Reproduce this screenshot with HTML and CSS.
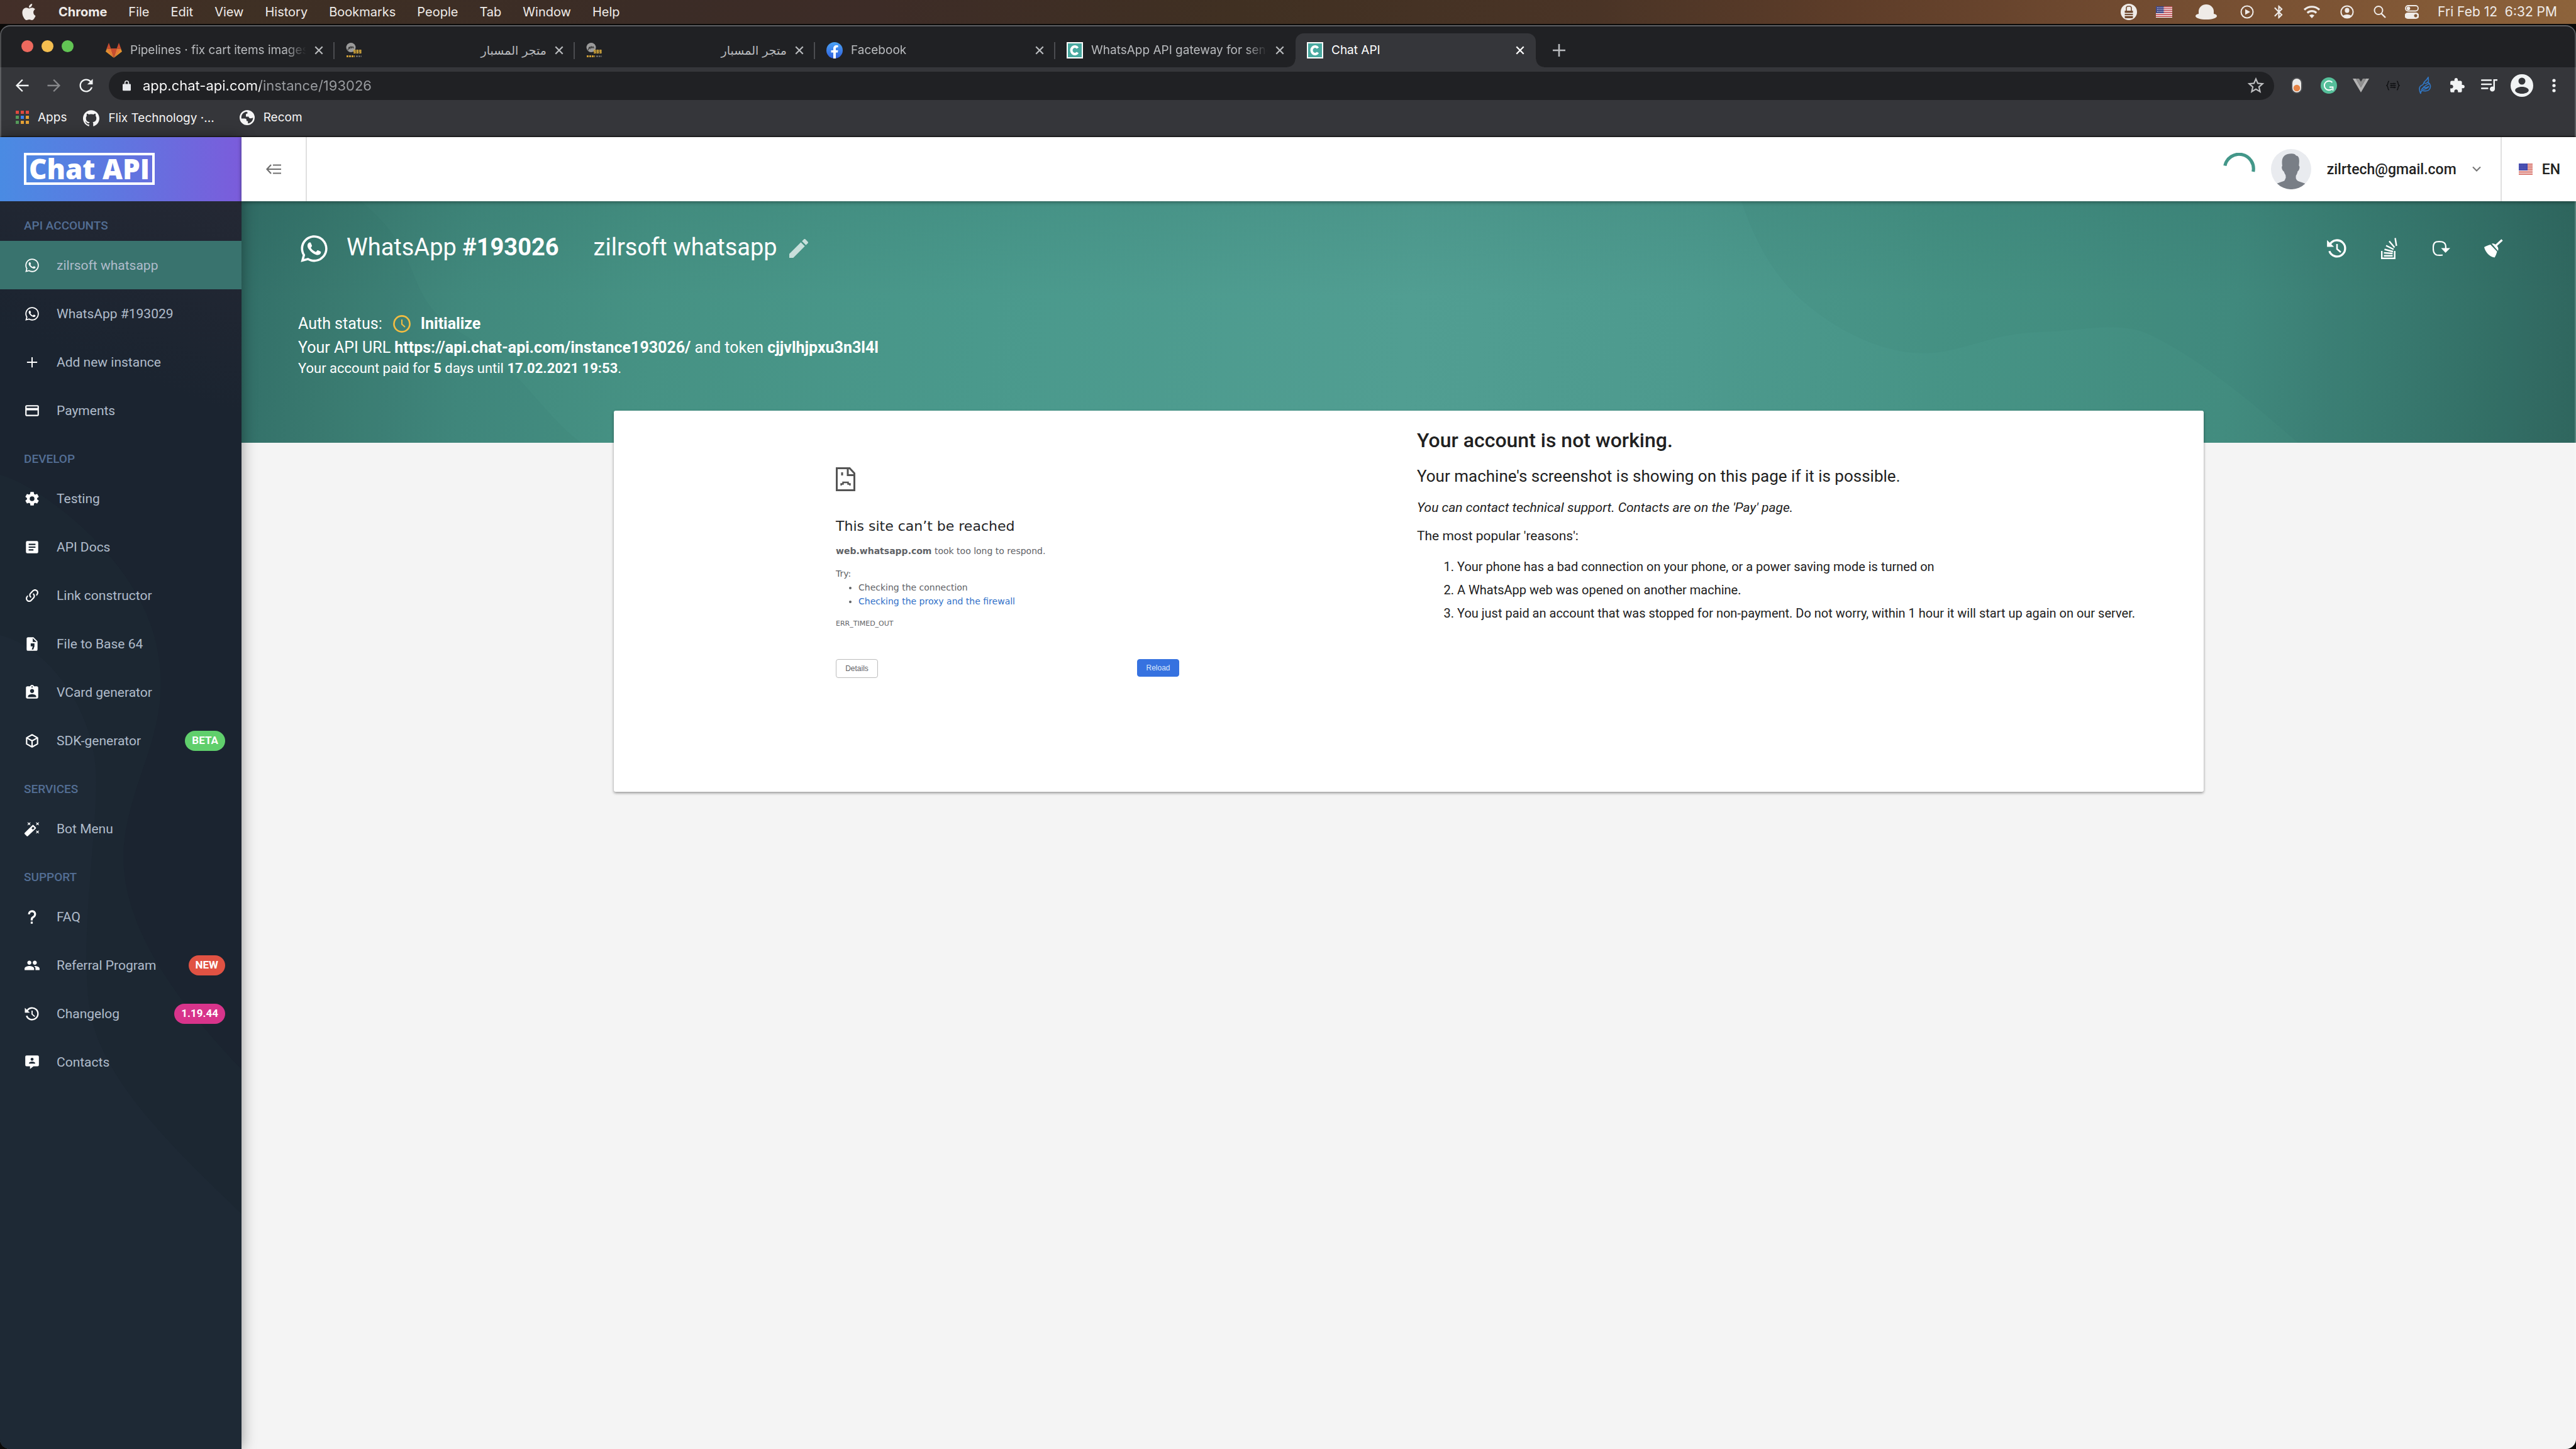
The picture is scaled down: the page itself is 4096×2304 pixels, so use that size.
FILE: index.html
```html
<!DOCTYPE html>
<html lang="en">
<head>
<meta charset="utf-8">
<title>Chat API</title>
<link rel="stylesheet" href="styles.css">
</head>
<body>
<svg class="sprite" aria-hidden="true">
  <symbol id="i-whatsapp" viewBox="0 0 24 24"><path d="M12.04 2C6.58 2 2.13 6.45 2.13 11.91C2.13 13.66 2.59 15.36 3.45 16.86L2.05 22L7.3 20.62C8.75 21.41 10.38 21.83 12.04 21.83C17.5 21.83 21.95 17.38 21.95 11.92C21.95 9.27 20.92 6.78 19.05 4.91C17.18 3.03 14.69 2 12.04 2M12.05 3.67C14.25 3.67 16.31 4.53 17.87 6.09C19.42 7.65 20.28 9.72 20.28 11.92C20.28 16.46 16.58 20.15 12.04 20.15C10.56 20.15 9.11 19.76 7.85 19L7.55 18.83L4.43 19.65L5.26 16.61L5.06 16.29C4.24 15 3.8 13.47 3.8 11.91C3.81 7.37 7.5 3.67 12.05 3.67M8.53 7.33C8.37 7.33 8.1 7.39 7.87 7.64C7.65 7.89 7 8.5 7 9.71C7 10.93 7.89 12.1 8 12.27C8.14 12.44 9.76 14.94 12.25 16C12.84 16.27 13.3 16.42 13.66 16.53C14.25 16.72 14.79 16.69 15.22 16.63C15.7 16.56 16.68 16.03 16.89 15.45C17.1 14.87 17.1 14.38 17.04 14.27C16.97 14.17 16.81 14.11 16.56 14C16.31 13.86 15.09 13.26 14.87 13.18C14.64 13.1 14.5 13.06 14.31 13.3C14.15 13.55 13.67 14.11 13.53 14.27C13.38 14.44 13.24 14.46 13 14.34C12.74 14.21 11.94 13.95 11 13.11C10.26 12.45 9.77 11.64 9.62 11.39C9.5 11.15 9.61 11 9.73 10.89C9.84 10.78 10 10.6 10.1 10.45C10.23 10.31 10.27 10.2 10.35 10.04C10.43 9.87 10.39 9.73 10.33 9.61C10.27 9.5 9.77 8.26 9.56 7.77C9.36 7.29 9.16 7.35 9 7.34C8.86 7.34 8.7 7.33 8.53 7.33Z"/></symbol>
  <symbol id="i-close" viewBox="0 0 14 14"><path d="M2 2l10 10M12 2L2 12" fill="none" stroke="currentColor" stroke-width="2"/></symbol>
  <symbol id="i-history" viewBox="0 0 24 24"><path d="M4.600 7.600A8.600 8.600 0 1 1 3.900 14.800" fill="none" stroke="currentColor" stroke-width="2.200"/><path d="M1.400 3.200V10.400H8.800Z"/><path d="M12 7.400v5.200l4 3.400" fill="none" stroke="currentColor" stroke-width="1.700"/></symbol>
  <symbol id="i-flag" viewBox="0 0 26 18"><path fill="#fff" d="M0 0h26v18H0z"/><path d="M0 1h26M0 4h26M0 7h26M0 10h26M0 13h26M0 16h26" stroke="#b22f36" stroke-width="1.500"/><path fill="#444a86" d="M0 0h12.500v11H0z"/><path d="M2 2.500h10M2 5.500h10M2 8.500h10" stroke="#fff" stroke-width="1" stroke-dasharray="1 1.200"/></symbol>
  <symbol id="i-flag-soft" viewBox="0 0 22 18"><path fill="#f7dedb" d="M0 0h22v18H0z"/><path d="M0 1h22M0 4h22M0 7h22M0 10h22M0 13.500h22M0 17h22" stroke="#d0584f" stroke-width="1.600"/><path fill="#4046ab" d="M0 0h14v11H0z"/><path d="M1 2.500h12M1 5.500h12M1 8.500h12" stroke="#7d82cf" stroke-width="1" stroke-dasharray="1 1.400"/></symbol>
  <symbol id="i-c" viewBox="0 0 26 26"><path fill="#fff" d="M0 0h26v26H0z"/><path fill="#49a9a0" d="M2 2h22v22H2z"/><path d="M17.500 9.500A5.500 6 0 1 0 17.500 16.500" fill="none" stroke="#fff" stroke-width="4"/></symbol>
  <symbol id="i-shop" viewBox="0 0 26 26"><circle cx="8" cy="8.500" r="7.500" fill="#9b9b9b"/><path d="M3 13c2-6 3-7 3-2 1-4 3-6 3-1 1-3 3-4 3 0" fill="none" stroke="#333" stroke-width="1.200"/><path d="M12 15h13" stroke="#d9ab3c" stroke-width="6" stroke-dasharray="3.500 1"/><path d="M12.500 14h13M12 16.500h13" stroke="#6b5a2c" stroke-width="1" stroke-dasharray="2 2.500"/><path d="M1 22.500h13" stroke="#c99b35" stroke-width="3" stroke-dasharray="3 1"/><path d="M16 22.500h9" stroke="#777" stroke-width="2" stroke-dasharray="3 1"/></symbol>
</svg>

<header class="menubar">
  <svg class="apple" viewBox="0 0 24 24"><path d="M12.152 6.896c-.948 0-2.415-1.078-3.960-1.040-2.040.027-3.910 1.183-4.961 3.014-2.117 3.675-.546 9.103 1.519 12.090 1.013 1.454 2.208 3.090 3.792 3.039 1.520-.065 2.090-.987 3.935-.987 1.831 0 2.350.987 3.960.948 1.637-.026 2.676-1.480 3.676-2.948 1.156-1.688 1.636-3.325 1.662-3.415-.039-.013-3.182-1.221-3.220-4.857-.026-3.040 2.480-4.494 2.597-4.559-1.429-2.090-3.623-2.324-4.390-2.376-2-.156-3.675 1.090-4.610 1.090zM15.530 3.830c.843-1.012 1.400-2.427 1.245-3.830-1.207.052-2.662.805-3.532 1.818-.780.896-1.454 2.338-1.273 3.714 1.338.104 2.715-.688 3.559-1.701"/></svg>
  <nav class="menus"><strong>Chrome</strong><span>File</span><span>Edit</span><span>View</span><span>History</span><span>Bookmarks</span><span>People</span><span>Tab</span><span>Window</span><span>Help</span></nav>
  <div class="tray">
    <svg width="26" height="26" viewBox="0 0 26 26"><circle cx="13" cy="13" r="13"/><path d="M9 11V7a2.500 2.500 0 0 1 2.500-3h3A2.500 2.500 0 0 1 17 7v4" fill="none" stroke="#704a30" stroke-width="1.600"/><path d="M6.500 11h13v3.500h-13zM6.500 16h13v2h-13zM6.500 19.500h13v2.500a1 1 0 0 1-1 1h-11a1 1 0 0 1-1-1z" fill="#704a30"/></svg>
    <svg width="26" height="18"><use href="#i-flag"/></svg>
    <svg width="48" height="26" viewBox="0 0 48 26"><path d="M12 14V12a12 11 0 0 1 24 0v4c3 .500 5 1.500 5 3.500C41 23 33 25 24 25S7 23 7 19.500c0-2 2-3 5-3.500z"/></svg>
    <svg width="22" height="22" viewBox="0 0 22 22"><circle cx="11" cy="11" r="9.500" fill="none" stroke="currentColor" stroke-width="2"/><path d="M8 6.500v9l8-4.500z"/></svg>
    <svg width="18" height="26" viewBox="3 1 17 22"><path d="M17.710 7.710L12 2h-1v7.590L6.410 5 5 6.410 10.590 12 5 17.590 6.410 19 11 14.410V22h1l5.710-5.710-4.300-4.290 4.300-4.290zM13 5.830l1.880 1.880L13 9.590V5.830zm1.880 10.460L13 18.170v-3.760l1.880 1.880z"/></svg>
    <svg width="28" height="22" viewBox="0 0 28 22"><path d="M2 7.500a17.500 17.500 0 0 1 24 0M6.800 12.500a10.500 10.500 0 0 1 14.400 0" fill="none" stroke="currentColor" stroke-width="3.200"/><path d="M10 16.500a6 6 0 0 1 8 0L14 21z"/></svg>
    <svg width="24" height="24" viewBox="0 0 24 24"><circle cx="12" cy="12" r="9.600" fill="none" stroke="currentColor" stroke-width="2"/><ellipse cx="12" cy="9.500" rx="3.600" ry="4"/><path d="M5 18.500c2-3.500 12-3.500 14 0a9.500 9.500 0 0 1-14 0z"/></svg>
    <svg width="20" height="22" viewBox="0 0 20 22"><circle cx="8" cy="8.500" r="6.500" fill="none" stroke="currentColor" stroke-width="2"/><path d="M12.500 13.500L19 20" stroke="currentColor" stroke-width="2.400"/></svg>
    <svg width="22" height="22" viewBox="0 0 22 22"><rect x="1" y="1" width="20" height="8.500" rx="4.200" fill="none" stroke="currentColor" stroke-width="1.800"/><circle cx="5.500" cy="5.200" r="2.800"/><path fill-rule="evenodd" d="M4.500 12h13a4.500 4.500 0 0 1 0 10h-13a4.500 4.500 0 0 1 0-10zm12.500 2.500a2.500 2.500 0 1 0 .1 0z"/></svg>
    <time>Fri Feb 12&nbsp; 6:32 PM</time>
  </div>
</header>

<div class="window">
  <div class="tabstrip">
    <div class="lights"><i class="red"></i><i class="amber"></i><i class="green"></i></div>
    <div class="tab">
      <svg class="fav" viewBox="0 0 26 26"><path fill="#e2912f" d="M0 15l2-5 11 15z"/><path fill="#e2912f" d="M26 15l-2-5-11 15z"/><path fill="#c94c2f" d="M1.500 10.500L5 1l3.500 9.500zM17.500 10.500L21 1l3.500 9.500zM8 10h10l-5 15z"/><path fill="#e67a38" d="M1.500 10.500H8.300L13 25zM24.500 10.500h-6.800L13 25z"/></svg>
      <span class="name">Pipelines · fix cart items images</span><button aria-label="Close tab"><svg><use href="#i-close"/></svg></button>
    </div>
    <div class="tab">
      <svg class="fav"><use href="#i-shop"/></svg>
      <span class="name" dir="rtl" lang="ar">متجر المسبار</span><button aria-label="Close tab"><svg><use href="#i-close"/></svg></button>
    </div>
    <div class="tab">
      <svg class="fav"><use href="#i-shop"/></svg>
      <span class="name" dir="rtl" lang="ar">متجر المسبار</span><button aria-label="Close tab"><svg><use href="#i-close"/></svg></button>
    </div>
    <div class="tab">
      <svg class="fav" viewBox="0 0 26 26"><defs><linearGradient id="fb" x2="0" y2="1"><stop stop-color="#4ba3f5"/><stop offset="1" stop-color="#2f5fdc"/></linearGradient></defs><circle cx="13" cy="13" r="13" fill="url(#fb)"/><path fill="#fff" d="M11 26v-9.500H7.500V13H11v-2.600c0-3.400 2-5.300 5-5.300 1.400 0 2.600.2 2.600.2v3H17c-1.500 0-2 1-2 2V13h3.600l-.6 3.500h-3V26z"/></svg>
      <span class="name">Facebook</span><button aria-label="Close tab"><svg><use href="#i-close"/></svg></button>
    </div>
    <div class="tab last">
      <svg class="fav"><use href="#i-c"/></svg>
      <span class="name">WhatsApp API gateway for send</span><button aria-label="Close tab"><svg><use href="#i-close"/></svg></button>
    </div>
    <div class="tab active">
      <svg class="fav"><use href="#i-c"/></svg>
      <span class="name">Chat API</span><button aria-label="Close tab"><svg><use href="#i-close"/></svg></button>
    </div>
    <button class="newtab" aria-label="New tab"><svg width="22" height="22" viewBox="0 0 22 22"><path d="M11 1v20M1 11h20" stroke="currentColor" stroke-width="2.600"/></svg></button>
  </div>

  <div class="toolbar">
    <button class="nav" aria-label="Back"><svg viewBox="0 0 24 24"><path d="M21 11H7.200l6.200-6.200L12 3.400 3.400 12l8.600 8.600 1.400-1.400L7.200 13H21z"/></svg></button>
    <button class="nav off" aria-label="Forward"><svg viewBox="0 0 24 24"><path d="M3 11h13.800l-6.200-6.200L12 3.400l8.600 8.600-8.600 8.600-1.400-1.400 6.200-6.200H3z"/></svg></button>
    <button class="nav" aria-label="Reload"><svg viewBox="0 0 24 24"><path d="M18.400 5.600C16.800 4 14.500 3 12 3c-5 0-9 4-9 9s4 9 9 9c4.200 0 7.700-2.900 8.700-6.700h-2.200C17.500 17.100 15 19 12 19c-3.900 0-7-3.100-7-7s3.100-7 7-7c1.900 0 3.700.8 5 2.100L13.500 10.500H21V3z"/></svg></button>
    <div class="omnibox">
      <svg class="lock" viewBox="0 0 16 22"><path d="M4.500 9V5.500a3.500 3.500 0 0 1 7 0V9" fill="none" stroke="currentColor" stroke-width="2"/><rect y="8" width="16" height="13" rx="1.500"/></svg>
      <input type="text" aria-label="Address" value="app.chat-api.com/instance/193026">
      <button aria-label="Bookmark this page"><svg width="32" height="32" viewBox="0 0 24 24"><path d="M22 9.240l-7.190-.62L12 2 9.190 8.630 2 9.240l5.460 4.730L5.820 21 12 17.270 18.180 21l-1.630-7.030L22 9.240zM12 15.400l-3.760 2.270 1-4.280-3.320-2.880 4.380-.38L12 6.100l1.710 4.040 4.380.38-3.320 2.880 1 4.280L12 15.400z"/></svg></button>
    </div>
    <div class="exts">
      <button aria-label="Toggle"><svg width="18" height="26" viewBox="0 0 18 26"><rect width="18" height="26" rx="9" fill="#4a4b4e"/><rect x="2" y="2" width="14" height="22" rx="7" fill="#ecebe9"/><circle cx="9" cy="17" r="5.300" fill="#e58345"/></svg></button>
      <button aria-label="Grammarly"><svg width="26" height="26" viewBox="0 0 26 26"><circle cx="13" cy="13" r="13" fill="#56bf9a"/><path d="M18.500 8A7.300 7.300 0 1 0 18 18.500" fill="none" stroke="#fff" stroke-width="1.900"/><path d="M14 15.500h5.500V21" fill="none" stroke="#fff" stroke-width="1.800"/></svg></button>
      <button aria-label="Vue devtools"><svg width="26" height="22" viewBox="0 0 26 22"><path fill="#b3b3b3" d="M0 0h5l8 14 8-14h5L13 22z"/><path fill="#8f8f8f" d="M5 0h5l3 5 3-5h5l-8 14z"/></svg></button>
      <button aria-label="JSON"><svg width="22" height="16" viewBox="0 0 22 16"><path d="M5 1C2 1 4 7 1 8c3 1 1 7 4 7M17 1c3 0 1 6 4 7-3 1-1 7-4 7M6.500 5h9M6.500 8h9M6.500 11h9M12.500 3.700v2.600M8.500 6.700v2.600M13 9.700v2.600" fill="none" stroke="#111214" stroke-width="1.500"/></svg></button>
      <button aria-label="Feather"><svg width="20" height="28" viewBox="0 0 20 28"><path d="M3 27C0 20 0 15 6 13c2-1 1-4 4-6 2-1 3-3 5-6 0 3 1 5 0 8 4 3 5 8 1 12-3 3-8 1-11 1-2 1-2 3-2 5zM4 21c3-5 7-7 12-10M7 16c3 2 6 2 9-1M9 10c2 1 4 1 5-2M6 20c4 0 7-1 10-4" fill="none" stroke="#3177c4" stroke-width="1.700"/></svg></button>
      <button aria-label="Extensions"><svg width="26" height="26" viewBox="0 0 24 24"><path d="M20.500 11H19V7c0-1.100-.9-2-2-2h-4V3.500C13 2.120 11.880 1 10.500 1S8 2.120 8 3.500V5H4c-1.100 0-1.990.9-1.990 2v3.800H3.500c1.490 0 2.700 1.210 2.700 2.700s-1.210 2.700-2.700 2.700H2V20c0 1.100.9 2 2 2h3.800v-1.500c0-1.490 1.210-2.700 2.700-2.700 1.490 0 2.700 1.210 2.700 2.700V22H17c1.100 0 2-.9 2-2v-4h1.500c1.380 0 2.500-1.120 2.500-2.500S21.880 11 20.500 11z"/></svg></button>
      <button aria-label="Media"><svg width="26" height="20" viewBox="0 0 26 20"><path d="M1 1.500h15M1 8h15M1 14.500h9.500" stroke="currentColor" stroke-width="2.400" stroke-linecap="round"/><path d="M19.500 0H26v2.400h-4V15.500a4 4 0 1 1-2.500-3.700z"/></svg></button>
      <button class="me" aria-label="Profile"><svg width="36" height="36" viewBox="0 0 36 36"><path fill-rule="evenodd" d="M18 0a18 18 0 1 1 0 36 18 18 0 0 1 0-36zm0 5.500a5.500 5.500 0 1 0 0 11 5.500 5.500 0 0 0 0-11zM18 20c-6 0-10.800 2.500-10.800 5.500S12 31 18 31s10.800-2.500 10.800-5.500S24 20 18 20z"/></svg></button>
      <button class="more" aria-label="Menu"><svg width="6" height="22" viewBox="0 0 6 22"><circle cx="3" cy="3" r="2.600"/><circle cx="3" cy="11" r="2.600"/><circle cx="3" cy="19" r="2.600"/></svg></button>
    </div>
  </div>

  <div class="bookmarks">
    <a href="#"><svg class="apps" viewBox="0 0 21 22"><path fill="#e04a3f" d="M0 0h5v5H0zM8 0h5v5H8zM16 0h5v5h-5z"/><path fill="#559b5a" d="M0 8h5v5H0zM0 16h5v5H0z"/><path fill="#3f82f0" d="M8 8h5v5H8z"/><path fill="#e5a236" d="M16 8h5v5h-5zM8 16h5v5H8zM16 16h5v5h-5z"/></svg>Apps</a>
    <a href="#"><svg width="26" height="26" viewBox="0 0 24 24"><path d="M12 .297c-6.630 0-12 5.373-12 12 0 5.303 3.438 9.800 8.205 11.385.6.113.82-.258.82-.577 0-.285-.01-1.040-.015-2.040-3.338.724-4.042-1.610-4.042-1.610C4.422 18.070 3.633 17.700 3.633 17.700c-1.087-.744.084-.729.084-.729 1.205.084 1.838 1.236 1.838 1.236 1.070 1.835 2.809 1.305 3.495.998.108-.776.417-1.305.76-1.605-2.665-.3-5.466-1.332-5.466-5.930 0-1.310.465-2.380 1.235-3.220-.135-.303-.54-1.523.105-3.176 0 0 1.005-.322 3.300 1.230.96-.267 1.980-.399 3-.405 1.020.006 2.040.138 3 .405 2.280-1.552 3.285-1.230 3.285-1.230.645 1.653.24 2.873.12 3.176.765.84 1.230 1.910 1.230 3.220 0 4.610-2.805 5.625-5.475 5.920.42.36.81 1.096.81 2.220 0 1.606-.015 2.896-.015 3.286 0 .315.21.69.825.57C20.565 22.092 24 17.592 24 12.297c0-6.627-5.373-12-12-12"/></svg>Flix Technology ·...</a>
    <a href="#"><svg width="24" height="24" viewBox="0 0 24 24"><path fill-rule="evenodd" d="M12 0a12 12 0 1 1 0 24 12 12 0 0 1 0-24zM11 2.700C6 3 2.700 7 2.700 12l.2 1.500H8c2 0 3 .8 3 2.500v1.500h2.200v3.800c5-.6 8.300-4.600 8.100-9.300-.8.700-2 1.200-3.500 1.200-2.300 0-3.300-1-3.300-2.700H10V7.500c0-1.500.8-2 2.500-2V3.500z"/></svg>Recom</a>
  </div>

  <div class="page">
    <aside class="sidebar">
      <a class="brand" href="#"><span>Chat API</span></a>
      <nav>
        <svg class="waves" viewBox="0 0 384 1984" preserveAspectRatio="none" aria-hidden="true"><path d="M0 435C60 450 210 560 245 690S220 890 200 1000s40 230 184 380v604H0z" fill="#1c2732"/><path d="M0 690c80 20 146 120 152 210s-26 260-10 380 150 240 242 330v374H0z" fill="#1e2935"/></svg>
        <h2>API ACCOUNTS</h2>
        <a href="#" class="on"><svg><use href="#i-whatsapp"/></svg>zilrsoft whatsapp</a>
        <a href="#"><svg><use href="#i-whatsapp"/></svg>WhatsApp #193029</a>
        <a href="#"><svg viewBox="0 0 24 24"><path d="M19.500 12.900h-6.600v6.600h-1.800v-6.600H4.500v-1.800h6.600V4.500h1.800v6.600h6.600z"/></svg>Add new instance</a>
        <a href="#"><svg viewBox="0 0 24 24"><path d="M20 4H4c-1.110 0-1.990.89-1.990 2L2 18c0 1.110.89 2 2 2h16c1.110 0 2-.89 2-2V6c0-1.110-.89-2-2-2zm0 14H4v-6.500h16V18zm0-10H4V5.700h16V8z"/></svg>Payments</a>
        <h2>DEVELOP</h2>
        <a href="#"><svg viewBox="0 0 24 24"><path d="M12,15.500A3.500,3.500 0 0,1 8.500,12A3.500,3.500 0 0,1 12,8.500A3.500,3.500 0 0,1 15.500,12A3.500,3.500 0 0,1 12,15.500M19.430,12.970C19.470,12.650 19.500,12.330 19.500,12C19.500,11.670 19.470,11.340 19.430,11L21.540,9.370C21.730,9.220 21.780,8.950 21.660,8.730L19.660,5.270C19.540,5.050 19.270,4.960 19.050,5.050L16.560,6.050C16.040,5.660 15.500,5.320 14.870,5.070L14.500,2.420C14.460,2.180 14.250,2 14,2H10C9.750,2 9.540,2.180 9.500,2.420L9.130,5.070C8.500,5.320 7.960,5.660 7.440,6.050L4.950,5.050C4.730,4.960 4.460,5.050 4.340,5.270L2.340,8.730C2.210,8.950 2.270,9.220 2.460,9.370L4.570,11C4.530,11.340 4.500,11.670 4.500,12C4.500,12.330 4.530,12.650 4.570,12.970L2.460,14.630C2.270,14.780 2.210,15.050 2.340,15.270L4.340,18.730C4.460,18.950 4.730,19.030 4.950,18.950L7.440,17.940C7.960,18.340 8.500,18.680 9.130,18.930L9.500,21.580C9.540,21.820 9.750,22 10,22H14C14.250,22 14.460,21.820 14.500,21.580L14.870,18.930C15.500,18.670 16.040,18.340 16.560,17.940L19.050,18.950C19.270,19.030 19.540,18.950 19.660,18.730L21.660,15.270C21.780,15.050 21.730,14.780 21.540,14.630L19.430,12.970Z"/></svg>Testing</a>
        <a href="#"><svg viewBox="0 0 24 24"><path fill-rule="evenodd" d="M5 3h14a2 2 0 0 1 2 2v14a2 2 0 0 1-2 2H5a2 2 0 0 1-2-2V5a2 2 0 0 1 2-2zm2 4v2h10V7zm0 4v2h10v-2zm0 4v2h7v-2z"/></svg>API Docs</a>
        <a href="#"><svg viewBox="0 0 24 24"><path d="M10.590,13.410C11,13.800 11,14.440 10.590,14.830C10.200,15.220 9.560,15.220 9.170,14.830C7.220,12.880 7.220,9.710 9.170,7.760V7.760L12.710,4.220C14.660,2.270 17.830,2.270 19.780,4.220C21.730,6.170 21.730,9.340 19.780,11.290L18.290,12.780C18.300,11.960 18.170,11.140 17.890,10.360L18.360,9.880C19.540,8.710 19.540,6.810 18.360,5.640C17.190,4.460 15.290,4.460 14.120,5.640L10.590,9.170C9.410,10.340 9.410,12.240 10.590,13.410M13.410,9.170C13.800,8.780 14.440,8.780 14.830,9.170C16.780,11.120 16.780,14.290 14.830,16.240V16.240L11.290,19.780C9.340,21.730 6.170,21.730 4.220,19.780C2.270,17.830 2.270,14.660 4.220,12.710L5.710,11.220C5.700,12.040 5.830,12.860 6.110,13.650L5.640,14.120C4.460,15.290 4.460,17.190 5.640,18.360C6.810,19.540 8.710,19.540 9.880,18.360L13.410,14.830C14.590,13.660 14.590,11.760 13.410,10.590C13,10.200 13,9.560 13.410,9.170Z"/></svg>Link constructor</a>
        <a href="#"><svg viewBox="0 0 24 24"><path fill-rule="evenodd" d="M6 2h8l6 6v12a2 2 0 0 1-2 2H6a2 2 0 0 1-2-2V4c0-1.100.9-2 2-2zm7 1.500V9h5.500zM10 11v4.500h3L11.500 20h2.300L15.500 15.500V11z"/></svg>File to Base 64</a>
        <a href="#"><svg viewBox="0 0 24 24"><path d="M19 3h-4.180C14.400 1.840 13.300 1 12 1c-1.300 0-2.400.84-2.820 2H5c-1.100 0-2 .9-2 2v14c0 1.100.9 2 2 2h14c1.100 0 2-.9 2-2V5c0-1.100-.9-2-2-2zm-7 0c.55 0 1 .45 1 1s-.45 1-1 1-1-.45-1-1 .45-1 1-1zm0 4c1.660 0 3 1.340 3 3s-1.340 3-3 3-3-1.340-3-3 1.340-3 3-3zm6 12H6v-1.400c0-2 4-3.100 6-3.100s6 1.100 6 3.100V19z"/></svg>VCard generator</a>
        <a href="#"><svg viewBox="0 0 24 24"><path d="M12 3l8 4.500v9L12 21l-8-4.500v-9zM4 7.500l8 4.500 8-4.500M12 12v9" fill="none" stroke="currentColor" stroke-width="2" stroke-linejoin="round"/></svg>SDK-generator<b class="badge green">BETA</b></a>
        <h2>SERVICES</h2>
        <a href="#"><svg viewBox="0 0 24 24"><path fill-rule="evenodd" d="M14.400 6.600l3 3a1.400 1.400 0 0 1 0 2L6 22.400a1.400 1.400 0 0 1-2 0L1.200 19.700a1.400 1.400 0 0 1 0-2L12.400 6.600a1.400 1.400 0 0 1 2 0zm-1 2.100l-2.300 2.300 2.200 2.200 2.300-2.300z"/><path d="M5 2l2.500 1.400L10 2 8.600 4.500 10 7 7.500 5.600 5 7l1.400-2.500zM17.500 2L20 3.400 22.500 2l-1.400 2.500L22.500 7 20 5.600 17.500 7l1.400-2.500zM17.500 14l2.500 1.400 2.500-1.400-1.400 2.500 1.400 2.500-2.500-1.400-2.500 1.400 1.400-2.500z"/></svg>Bot Menu</a>
        <h2>SUPPORT</h2>
        <a href="#"><svg viewBox="0 0 24 24"><path d="M10,19H13V22H10V19M12,2C17.350,2.220 19.680,7.620 16.500,11.670C15.670,12.670 14.330,13.330 13.670,14.170C13,15 13,16 13,17H10C10,15.330 10,13.920 10.670,12.920C11.330,11.920 12.670,11.330 13.500,10.670C15.920,8.430 15.320,5.260 12,5A3,3 0 0,0 9,8H6A6,6 0 0,1 12,2Z"/></svg>FAQ</a>
        <a href="#"><svg viewBox="0 0 24 24"><path d="M16 11c1.660 0 2.990-1.340 2.990-3S17.660 5 16 5c-1.660 0-3 1.340-3 3s1.340 3 3 3zm-8 0c1.660 0 2.990-1.340 2.990-3S9.660 5 8 5C6.340 5 5 6.340 5 8s1.340 3 3 3zm0 2c-2.330 0-7 1.170-7 3.500V19h14v-2.500c0-2.330-4.670-3.500-7-3.500zm8 0c-.29 0-.62.02-.97.05 1.160.84 1.970 1.970 1.970 3.450V19h6v-2.500c0-2.330-4.670-3.500-7-3.500z"/></svg>Referral Program<b class="badge red">NEW</b></a>
        <a href="#"><svg><use href="#i-history"/></svg>Changelog<b class="badge pink">1.19.44</b></a>
        <a href="#"><svg viewBox="0 0 24 24"><path fill-rule="evenodd" d="M4 2h16a2 2 0 0 1 2 2v12a2 2 0 0 1-2 2h-6l-5 4v-4H4a2 2 0 0 1-2-2V4a2 2 0 0 1 2-2zm8 3.500a2.200 2.200 0 1 0 0 4.400 2.200 2.200 0 0 0 0-4.400zM12 11c-2.500 0-4.500 1-4.500 2.200V14h9v-.8c0-1.200-2-2.200-4.500-2.200z"/></svg>Contacts</a>
      </nav>
    </aside>

    <main>
      <header class="topbar">
        <button class="collapse" aria-label="Collapse menu"><svg width="24" height="16" viewBox="0 0 24 16"><path d="M8 1L1.500 8 8 15M2 8h22M11 1.500h13M11 14.500h13" fill="none" stroke="currentColor" stroke-width="2.200"/></svg></button>
        <div class="account">
          <svg width="52" height="52" viewBox="0 0 52 52" role="img" aria-label="Loading"><path d="M3.800 20.500A22.800 22.800 0 0 1 48.700 30" fill="none" stroke="#439789" stroke-width="5.200"/></svg>
          <svg class="avatar" viewBox="0 0 80 80"><circle cx="40" cy="40" r="40" fill="#e9ebef"/><path fill="#797e86" d="M12 68.500c4-2 11-4 14.500-5.500 1.500-2 2-4 3-6.500l-.5-5c-2-2-2.500-5-3.500-7-3-1-5.500-9-3-11C20 18 25 9 41 9c5 0 7 1.500 9 4 8 .5 6 13 5.500 20 3 2 .5 10-2.500 11.500-.5 3-1.500 6-3.500 8.500v5c1 2 1.500 3.500 4 5.500 5 2 11 3.500 14.500 5.200A40 40 0 0 1 12 68.500z"/></svg>
          <b>zilrtech@gmail.com</b>
          <svg class="chev" width="14" height="10" viewBox="0 0 14 10"><path d="M1 1.500l6 6 6-6" fill="none" stroke="currentColor" stroke-width="2"/></svg>
        </div>
        <a class="lang" href="#"><svg width="22" height="18"><use href="#i-flag-soft"/></svg>EN</a>
      </header>

      <section class="banner">
        <svg class="waves" viewBox="0 0 3712 384" preserveAspectRatio="none" aria-hidden="true"><path d="M190 0C300 90 250 150 350 210s120 120 190 174H0V0z" fill="#0d4b46" fill-opacity=".04"/><path d="M2385 0c20 60 50 120 105 165 60 50 140 85 210 75 60-10 90-30 160-32 70-2 130-20 180 7 80 40 150 100 230 169h442V0z" fill="#0d4b46" fill-opacity=".04"/></svg>
        <div class="title">
          <svg class="logo"><use href="#i-whatsapp"/></svg>
          <h1>WhatsApp <b>#193026</b></h1>
          <h1 class="alias">zilrsoft whatsapp</h1>
          <button aria-label="Rename"><svg class="pencil" viewBox="0 0 24 24"><path d="M20.710 7.040C21.100 6.650 21.100 6 20.710 5.630L18.370 3.290C18 2.900 17.350 2.900 16.960 3.290L15.120 5.120L18.870 8.870M3 17.250V21H6.750L17.810 9.930L14.060 6.180L3 17.250Z"/></svg></button>
          <div class="actions">
            <button aria-label="History"><svg width="36" height="36"><use href="#i-history"/></svg></button>
            <button aria-label="Queue"><svg width="26" height="34" viewBox="0 0 26 34"><path d="M1.200 21v11.800h20.500V21" fill="none" stroke="currentColor" stroke-width="2.400"/><path d="M4.500 28.700h14M4.500 24l14 1M5.500 18.500l13.500 3.500M8 12.500l12 6M13 5.500l8.500 10M22.500.5l2 12.500" stroke="currentColor" stroke-width="2.400"/></svg></button>
            <button aria-label="Reload instance"><svg width="28" height="24" viewBox="0 0 28 24"><path d="M16 22.500c-3 .5-6 .5-9.500 0C2 21 1 16 1 12S1 3 6 1.500c3-.5 6-.5 9 0 6 1.500 6 6 6 10.500" fill="none" stroke="currentColor" stroke-width="2.200"/><path d="M13.500 11.500H28L20.500 19z"/></svg></button>
            <button aria-label="Clear"><svg width="30" height="30" viewBox="0 0 30 30"><path d="M17.500 11.500L28.500 1.500" stroke="currentColor" stroke-width="3.200"/><path d="M12 7.500c3-1 5.500.5 8 3s3 5.500 2 8.500zM10 9L20.500 20c-1 3.500-2 6.500-4 9.500C8 28 2 21 0 13c3-2 6-3 10-4z"/></svg></button>
          </div>
        </div>
        <div class="status">
          <p class="auth">Auth status: <svg width="28" height="28" viewBox="0 0 28 28"><circle cx="14" cy="14" r="12.600" fill="none" stroke="#f2bd42" stroke-width="2.600"/><path d="M14 7v7.500l5 4.500" fill="none" stroke="#f2bd42" stroke-width="2"/></svg><b>Initialize</b></p>
          <p class="api">Your API URL <b>https://api.chat-api.com/instance193026/</b> and token <b>cjjvlhjpxu3n3l4l</b></p>
          <p class="paid">Your account paid for <b>5</b> days until <b>17.02.2021 19:53</b>.</p>
        </div>
      </section>

      <section class="card">
        <div class="shot">
          <div class="frame">
            <svg width="31" height="38" viewBox="0 0 31 38"><path d="M1.500 1.500H22l7.500 8v27h-28z" fill="none" stroke="#545454" stroke-width="3"/><path d="M19 2v10.500h11" fill="none" stroke="#545454" stroke-width="3"/><path d="M10 8v5" stroke="#545454" stroke-width="3"/><path d="M8.500 29v-2.500h3V24h8v2.500h3V29" fill="none" stroke="#545454" stroke-width="2.400"/></svg>
            <h3>This site can’t be reached</h3>
            <p><b>web.whatsapp.com</b> took too long to respond.</p>
            <p class="try">Try:</p>
            <ul><li>Checking the connection</li><li><a href="#">Checking the proxy and the firewall</a></li></ul>
            <p class="code">ERR_TIMED_OUT</p>
            <div class="btns"><button>Details</button><button class="primary">Reload</button></div>
          </div>
        </div>
        <div class="info">
          <h2>Your account is not working.</h2>
          <h3>Your machine's screenshot is showing on this page if it is possible.</h3>
          <p><em>You can contact technical support. Contacts are on the 'Pay' page.</em></p>
          <p>The most popular 'reasons':</p>
          <ol><li>Your phone has a bad connection on your phone, or a power saving mode is turned on</li><li>A WhatsApp web was opened on another machine.</li><li>You just paid an account that was stopped for non-payment. Do not worry, within 1 hour it will start up again on our server.</li></ol>
        </div>
      </section>
    </main>
  </div>
</div>
</body>
</html>
```
FILE: styles.css
```css
* { box-sizing: border-box; }
html, body { height: 100%; }
body {
  margin: 0;
  display: flex;
  flex-direction: column;
  background: #0b0a09;
  font-family: Roboto, sans-serif;
}
h1, h2, h3, p, ul, ol { margin: 0; padding: 0; font-weight: 400; }
button { border: 0; padding: 0; background: none; color: inherit; font: inherit; display: grid; place-items: center; }
a { color: inherit; text-decoration: none; }
svg { fill: currentColor; flex: none; display: block; }
.sprite { position: absolute; width: 0; height: 0; }

/* macOS menu bar */
.menubar {
  height: 38px;
  flex: none;
  margin-bottom: 2px;
  display: flex;
  align-items: center;
  padding: 0 30px 0 33px;
  color: #efebe8;
  font: 400 20px/38px Inter, sans-serif;
  background: linear-gradient(90deg, #432f29 0%, #3f3024 9%, #3b2c26 25%, #3d2c27 34%, #403022 48%, #4a3426 62%, #5e3d29 72%, #704a30 82%, #7f5635 92%, #8d633b 100%);
}
.apple { width: 26px; height: 26px; margin-right: 34px; }
.menus { display: flex; gap: 34px; }
.menus strong { font-weight: 700; }
.tray { margin-left: auto; display: flex; align-items: center; gap: 30px; }
.tray time { font-size: 21px; }

/* browser window */
.window { position: relative; flex: 1; display: flex; flex-direction: column; border-radius: 16px; overflow: hidden; background: #35363a; font-family: Inter, sans-serif; }
.window::after { content: ""; position: absolute; inset: 0; border-radius: 16px; box-shadow: inset 0 2px 0 #5d5f63, inset 2px 0 0 rgba(255, 255, 255, .2), inset -2px 0 0 rgba(255, 255, 255, .2); pointer-events: none; }
.tabstrip { height: 67px; flex: none; background: #202124; display: flex; align-items: flex-end; color: #b9bbbe; }
.lights { flex: none; display: flex; gap: 13px; width: 150px; padding: 0 0 24px 34px; }
.lights i { width: 19px; height: 19px; border-radius: 50%; }
.lights .red { background: #ec695e; }
.lights .amber { background: #f4be50; }
.lights .green { background: #62c554; }
.tab { position: relative; flex: 0 1 382px; min-width: 0; height: 54px; display: flex; align-items: center; padding: 0 17px 0 18px; font-size: 19px; }
.tab::after { content: ""; position: absolute; right: 0; top: 14px; width: 2px; height: 27px; background: #4b4c50; }
.tab.last::after { display: none; }
.fav { width: 26px; height: 26px; margin-right: 13px; }
.name { flex: 1; min-width: 0; overflow: hidden; white-space: nowrap; line-height: 30px; mask-image: linear-gradient(90deg, #000 88%, transparent); }
.name[lang="ar"] { mask-image: none; font-family: "DejaVu Sans", sans-serif; }
.tab button { width: 16px; height: 16px; margin-left: 12px; }
.tab button svg { width: 16px; height: 16px; }
.tab.active { background: #35363a; border-radius: 13px 13px 0 0; color: #fff; }
.tab.active .name { mask-image: none; }
.tab.active::before, .tab.active::after {
  content: ""; display: block; position: absolute; top: auto; bottom: 0; width: 13px; height: 13px; background: radial-gradient(circle at 0 0, transparent 12px, #35363a 13px);
}
.tab.active::before { left: -13px; }
.tab.active::after { right: -13px; background: radial-gradient(circle at 100% 0, transparent 12px, #35363a 13px); }
.newtab { width: 74px; height: 54px; }
.toolbar { height: 58px; flex: none; display: flex; align-items: center; padding: 0 11px 0 9px; color: #f1f3f4; }
.nav { width: 51px; height: 45px; }
.nav svg { width: 28px; height: 28px; }
.nav.off { color: #87888b; }
.omnibox { flex: 1; height: 45px; margin: 0 10px 0 11px; border-radius: 23px; background: #202124; display: flex; align-items: center; padding: 0 13px 0 22px; }
.lock { width: 13px; height: 18px; color: #e8eaed; }
.omnibox input {
  flex: 1; border: 0; outline: 0; height: 45px; margin-left: 19px; padding: 0;
  font: 400 22px/45px Inter, sans-serif; color: #fff; -webkit-text-fill-color: transparent;
  background: linear-gradient(90deg, #fff 187px, #9a9da1 187px); -webkit-background-clip: text; background-clip: text;
}
.omnibox button { color: #bdbec0; }
.exts { display: flex; align-items: center; }
.exts button { width: 51px; height: 45px; }
.exts .me { width: 54px; }
.exts .more { width: 48px; }
.bookmarks { height: 53px; flex: none; display: flex; align-items: flex-start; padding: 10px 25px; border-bottom: 2px solid #222224; color: #f5f5f5; font-size: 19px; line-height: 24px; }
.bookmarks a { display: flex; align-items: center; gap: 14px; margin-right: 26px; }
.bookmarks a:nth-child(2) { margin-right: 40px; }
.apps { width: 21px; height: 22px; }

/* page */
.page { flex: 1; display: flex; font-family: Roboto, sans-serif; background: #f4f4f4; }
.sidebar { position: relative; z-index: 1; width: 384px; flex: none; display: flex; flex-direction: column; background: #1b2430; box-shadow: 0 0 22px rgba(0, 0, 0, .4); }
.brand { height: 102px; padding: 25px 38px; background: linear-gradient(90deg, #4a8be3, #5f76e0 50%, #7b5cdb); }
.brand span { display: inline-block; width: 208px; height: 51px; border: 4px solid #fff; color: #fff; text-align: center; font: 800 44px/42px "Open Sans", sans-serif; }
.sidebar nav { position: relative; flex: 1; background: linear-gradient(200deg, #242834 0, #1b2430 16%); }
.waves { position: absolute; inset: 0; width: 100%; height: 100%; }
.sidebar h2 { position: relative; height: 63px; padding: 4px 38px 0; font-size: 19px; font-weight: 500; line-height: 69px; color: #536e94; }
.sidebar nav a { position: relative; height: 77px; display: flex; align-items: center; padding: 0 26px 0 38px; font-size: 21px; color: #b0bccb; }
.sidebar nav a svg { width: 26px; height: 26px; margin-right: 26px; color: #fff; }
.sidebar nav .on { background: #39736e; }
.badge { margin-left: auto; height: 32px; padding: 0 11px; border-radius: 16px; color: #fff; font-size: 17px; line-height: 31px; font-weight: 700; }
.badge.green { background: #60cf6c; }
.badge.red { background: #e05243; }
.badge.pink { background: #d8348b; }

main { flex: 1; min-width: 0; }
.topbar { position: relative; z-index: 1; height: 102px; display: flex; background: #fff; color: #212121; font-size: 23px; font-weight: 500; box-shadow: 0 1px 6px rgba(0, 0, 0, .45); }
.topbar b { font-weight: 500; }
.collapse { width: 104px; border-right: 2px solid #e0e0e0; color: #6f6f6f; }
.account { margin-left: auto; display: flex; align-items: center; gap: 25px; padding-right: 31px; }
.avatar { width: 64px; height: 64px; }
.chev { color: #757575; }
.lang { display: flex; align-items: center; gap: 15px; padding: 0 25px 0 27px; border-left: 2px solid #e0e0e0; }
.banner { position: relative; padding: 50px 90px 104px; color: #fff; background: linear-gradient(180deg, rgba(10, 60, 55, .08), transparent 40%), linear-gradient(95deg, #34716a 0%, #3b7b71 4%, #41897d 10%, #469284 18%, #4a998c 32%, #519e92 50%, #4d9a8e 62%, #469385 74%, #428c7f 85%, #3a7b71 92%, #30685f 100%); }
.title { position: relative; display: flex; align-items: center; height: 50px; }
.logo { width: 51px; height: 51px; margin-right: 26px; }
.title h1 { padding-bottom: 4px; font-size: 38px; line-height: 46px; }
.title .alias { margin: 0 14px 0 55px; }
.pencil { width: 40px; height: 40px; color: #c8dfdb; }
.actions { margin-left: auto; display: flex; }
.actions button { width: 83px; height: 50px; }
.status { position: relative; margin-top: 75px; font-size: 25px; }
.auth { display: flex; align-items: center; line-height: 39px; }
.auth svg { margin: 0 16px 0 17px; }
.api { line-height: 38px; }
.paid { font-size: 22px; line-height: 28px; }

.card { position: relative; max-width: 2528px; margin: -51px auto 0; padding: 0 13px 181px; display: grid; grid-template-columns: 1fr 1fr; gap: 26px; background: #fff; border-radius: 3px; box-shadow: 0 2px 4px rgba(0, 0, 0, .4); color: #212121; }
.shot { padding: 90px 0 0 340px; }
.frame { width: 546px; font: 14px/22px "DejaVu Sans", sans-serif; color: #5f6266; }
.frame h3 { margin-top: 42px; font-size: 22px; line-height: 28px; color: #232427; }
.frame p { margin-top: 14px; }
.frame .code { margin-top: 16px; font-size: 11px; line-height: 18px; }
.frame ul { padding-left: 36px; }
.frame li a { color: #2f6fc8; }
.btns { display: flex; justify-content: space-between; margin-top: 47px; }
.btns button { width: 67px; height: 30px; border: 1px solid #bcbcbc; border-radius: 4px; font: 12px/14px "Liberation Sans", sans-serif; color: #5f6266; }
.btns .primary { height: 28px; background: #3672e0; border-color: #3672e0; color: #dbe7fb; }
.info { padding-top: 27px; font-size: 21px; line-height: 28px; }
.info h2 { font-size: 32px; line-height: 40px; font-weight: 500; }
.info h3 { margin-top: 21px; font-size: 26px; line-height: 32px; }
.info h3 + p { margin-top: 20px; }
.info p { margin-top: 17px; }
.info ol { margin-top: 17px; padding-left: 64px; font-size: 20px; line-height: 37px; }
```
